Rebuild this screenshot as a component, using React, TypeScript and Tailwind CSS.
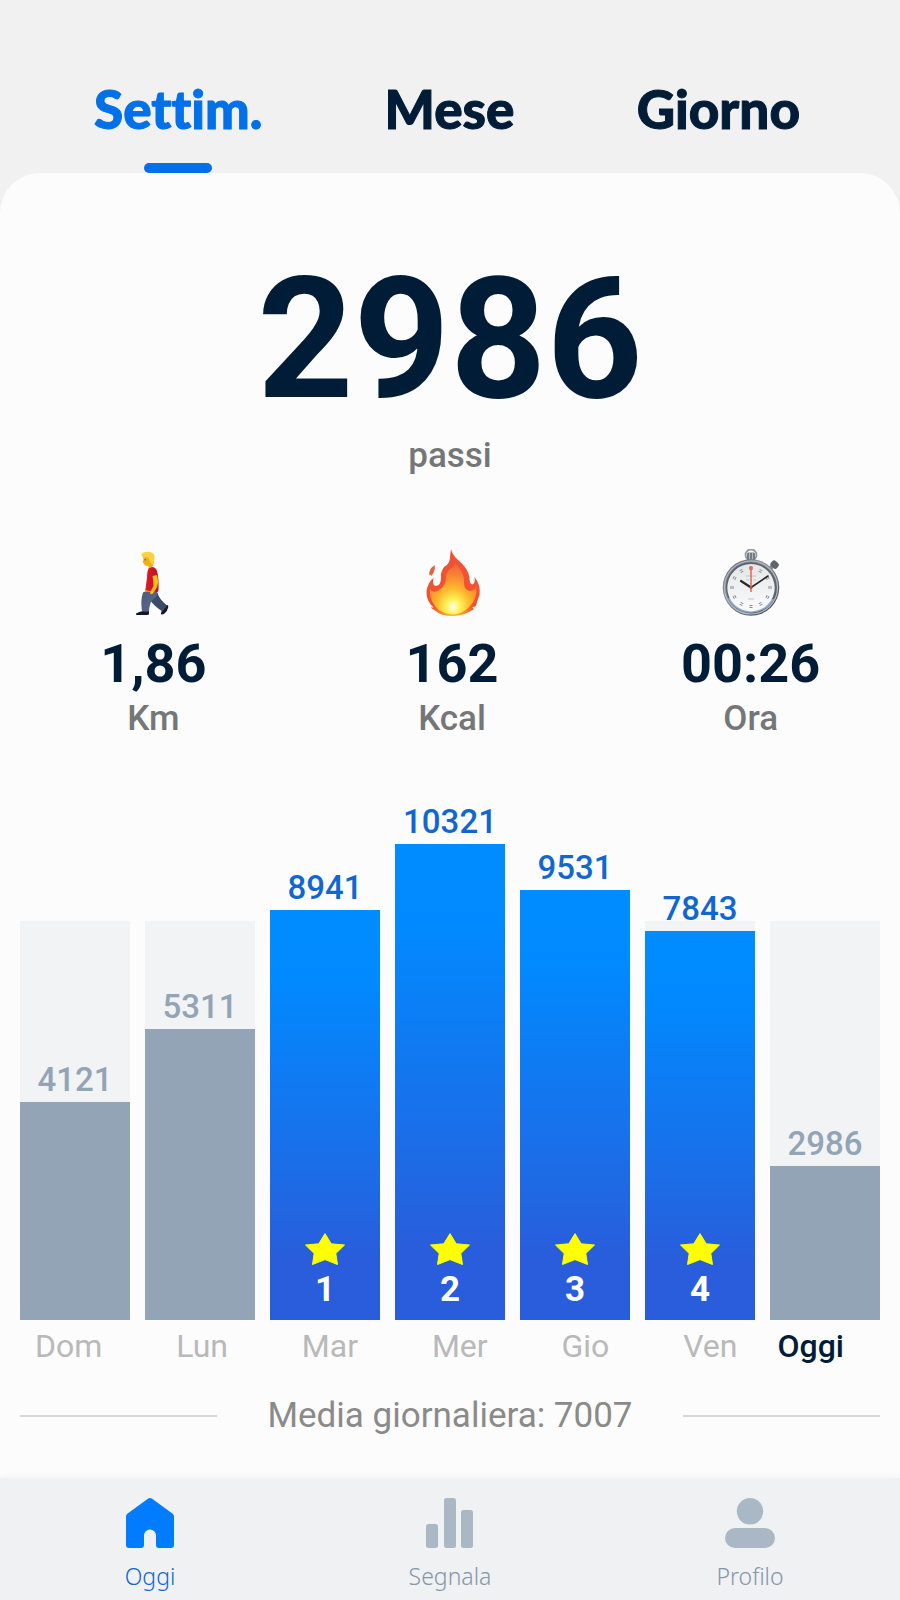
import { useState } from 'react'
import type { ReactNode } from 'react'
import { clsx } from 'clsx'

type NavKey = 'oggi' | 'segnala' | 'profilo'

interface Day {
  name: string
  steps: number
  height: number // bar height in px
  streak?: number
}

const GOAL_HEIGHT = 399

const DAYS: Day[] = [
  { name: 'Dom', steps: 4121, height: 218 },
  { name: 'Lun', steps: 5311, height: 291 },
  { name: 'Mar', steps: 8941, height: 410, streak: 1 },
  { name: 'Mer', steps: 10321, height: 476, streak: 2 },
  { name: 'Gio', steps: 9531, height: 430, streak: 3 },
  { name: 'Ven', steps: 7843, height: 389, streak: 4 },
  { name: 'Oggi', steps: 2986, height: 154 },
]

const TABS = ['Settim.', 'Mese', 'Giorno']

// ── Page ─────────────────────────────────────────────────────

export default function App() {
  const [tab, setTab] = useState('Settim.')
  const [nav, setNav] = useState<NavKey>('oggi')
  const pastDays = DAYS.slice(0, -1)
  const today = DAYS[DAYS.length - 1]

  return (
    <div className="min-h-screen flex flex-col bg-[#f1f1f1] font-['Roboto',sans-serif]">
      <header className="flex justify-between pl-[94px] pr-[100px] pt-[77px]">
        {TABS.map((t) => (
          <button
            key={t}
            type="button"
            onClick={() => setTab(t)}
            className={clsx(
              "flex flex-col items-center gap-[22px] font-['Lato',sans-serif] font-black text-[53px] leading-[64px] [font-variant-ligatures:none] [-webkit-text-stroke:1px]",
              t === tab ? 'text-[#0270e8]' : 'text-[#011c37]'
            )}
          >
            {t}
            <span className={clsx('h-[10px] w-[68px] rounded-full', t === tab && 'bg-[#0270e8]')} />
          </button>
        ))}
      </header>

      <main className="flex-1 bg-[#fcfcfc] rounded-t-[40px] pt-[84px] pb-10">
        {/* Total */}
        <section className="text-center">
          <h1 className="text-[168px] leading-[166px] font-bold text-[#011c37]">2986</h1>
          <p className="mt-[13px] text-[35px] leading-10 font-medium text-[#757678]">passi</p>
        </section>

        {/* Stats */}
        <section className="mt-[73px] grid grid-cols-3 pl-1">
          <Stat icon={<Walker />} value="1,86" unit="Km" />
          <Stat icon={<Flame />} value="162" unit="Kcal" />
          <Stat icon={<Stopwatch />} value="00:26" unit="Ora" />
        </section>

        {/* Chart */}
        <section className="mt-[62px] px-5">
          <div className="grid grid-cols-7 gap-[15px] h-[519px]">
            {DAYS.map((d) => (
              <Bar key={d.name} day={d} />
            ))}
          </div>
        </section>

        <div className="mt-[6px] flex gap-10 pl-[35px] pr-[56px] text-[32px] leading-10">
          <div className="flex flex-1 justify-between text-[#b9b9b9]">
            {pastDays.map((d) => (
              <span key={d.name}>{d.name}</span>
            ))}
          </div>
          <span className="font-medium text-[#011c37]">{today.name}</span>
        </div>

        <div className="mt-[30px] flex items-center gap-[50px] px-5">
          <div className="h-[2px] flex-1 bg-[#d8d8d8]" />
          <p className="text-[35px] leading-10 text-[#8a8a8a]">Media giornaliera: 7007</p>
          <div className="h-[2px] flex-1 bg-[#d8d8d8]" />
        </div>
      </main>

      <nav className="grid grid-cols-3 bg-[#eff1f3] pt-5 pb-[9px] shadow-[0_0_8px_#eeeeee]">
        <NavItem label="Oggi" active={nav === 'oggi'} onClick={() => setNav('oggi')}>
          <path d="M23.2 .6 Q25 -.6 26.8 .6 L48 16 Q49 17 49 18.500 V47 Q49 50 46 50 H34 Q31 50 31 47 V37.500 A6 6 0 0 0 19 37.500 V47 Q19 50 16 50 H4 Q1 50 1 47 V18.500 Q1 17 2 16 Z" />
        </NavItem>
        <NavItem label="Segnala" active={nav === 'segnala'} onClick={() => setNav('segnala')}>
          <rect x="1" y="26" width="12" height="24" rx="2.500" />
          <rect x="19" y="0" width="12" height="50" rx="2.500" />
          <rect x="36" y="12" width="12" height="38" rx="2.500" />
        </NavItem>
        <NavItem label="Profilo" active={nav === 'profilo'} onClick={() => setNav('profilo')}>
          <circle cx="25" cy="13.300" r="13.200" />
          <rect x="0" y="30" width="50" height="20" rx="10" />
        </NavItem>
      </nav>
    </div>
  )
}

// ── Parts ────────────────────────────────────────────────────

function Stat({ icon, value, unit }: { icon: ReactNode; value: string; unit: string }) {
  return (
    <div className="flex flex-col items-center">
      {icon}
      <p className="mt-[18px] text-[54px] leading-[60px] font-bold text-[#011c37]">{value}</p>
      <p className="mt-[5px] text-[35px] leading-10 font-medium text-[#757678]">{unit}</p>
    </div>
  )
}

function Bar({ day }: { day: Day }) {
  return (
    <div className="relative flex flex-col justify-end">
      {/* goal track */}
      <div className="absolute inset-x-0 bottom-0 bg-[#f1f3f5]" style={{ height: GOAL_HEIGHT }} />
      <p
        className={clsx(
          'relative mb-[2px] text-center text-[33px] leading-10 font-medium',
          day.streak ? 'text-[#1167d2]' : 'text-[#93a4b6]'
        )}
      >
        {day.steps}
      </p>
      <div
        className={clsx(
          'relative flex flex-col items-center justify-end pb-[10px]',
          day.streak
            ? 'bg-[linear-gradient(#008cff_0%,#018aff_16%,#1a6fe9_60%,#295ddb_85%,#295ddb_100%)]'
            : 'bg-[#93a4b6]'
        )}
        style={{ height: day.height }}
      >
        {day.streak && (
          <>
            <svg viewBox="0 0 40 32" className="w-10 h-8" fill="#ffff00" stroke="#ffff00" strokeLinejoin="round">
              <path d="M20 .6 L26.200 10.800 L39.500 12 L30.800 20.500 L32.500 31.500 L20 26.600 L7.500 31.500 L9.200 20.500 L.5 12 L13.800 10.800 Z" />
            </svg>
            <span className="mt-[5px] text-[35px] leading-10 font-bold text-white">{day.streak}</span>
          </>
        )}
      </div>
    </div>
  )
}

interface NavItemProps {
  label: string
  active: boolean
  onClick: () => void
  children: ReactNode
}

function NavItem({ label, active, onClick, children }: NavItemProps) {
  return (
    <button
      type="button"
      onClick={onClick}
      className={clsx('flex flex-col items-center gap-[13px]', active ? 'text-[#027cff]' : 'text-[#aab8c6]')}
    >
      <svg viewBox="0 0 50 50" className="w-[50px] h-[50px]" fill="currentColor">
        {children}
      </svg>
      <span
        className={clsx(
          "font-['Noto_Sans',sans-serif] font-light text-[23px] leading-[30px]",
          active ? 'text-[#1467cc]' : 'text-[#8496a9]'
        )}
      >
        {label}
      </span>
    </button>
  )
}

// ── Drawings ─────────────────────────────────────────────────

function Walker() {
  return (
    <svg viewBox="0 0 58 67" className="w-[58px] h-[67px]" aria-hidden="true">
      <defs>
        <linearGradient id="jeans" x1="0" y1="0" x2="1" y2="1">
          <stop offset="0" stopColor="#4c5b7c" />
          <stop offset="1" stopColor="#5c6a8b" />
        </linearGradient>
        <linearGradient id="shirt" x1="0" y1="0" x2="1" y2="0">
          <stop offset="0" stopColor="#e01a2c" />
          <stop offset="1" stopColor="#b8121f" />
        </linearGradient>
      </defs>
      {/* shoes */}
      <path d="M12 64.500 Q15 62.500 19 62 L25 61 V65 Q25 66 23 66 H13 Q11.600 66 12 64.500 Z" fill="#14172c" />
      <path d="M37.500 62.500 L42 56.500 Q44.500 55 44.300 58 Q43.500 62 40.500 64.500 Q38 66 36.800 65 Z" fill="#14172c" />
      {/* far arm */}
      <path d="M23 34 L21 42 L19 46 Q18 49 21 48 L26 42 Z" fill="#f0a60d" />
      {/* legs */}
      <path d="M25 44 L33.500 44 Q35 50 43 56.500 L38.500 62.500 Q30 57 26 51 Z" fill="#3d4a69" />
      <path d="M19.500 43 L33.500 42 Q34 48 28.500 51 Q25.500 54 25 62.500 L18 62.500 Q16.500 52 18.500 45 Z" fill="url(#jeans)" />
      {/* shirt */}
      <path d="M25 18.500 Q31 16.500 33 22 Q35 29 34.500 41 L33.500 43 Q27 43 21.500 41 Q22 35 23 29 Q23 22 25 18.500 Z" fill="url(#shirt)" />
      {/* near arm */}
      <path d="M28.500 27 L33 26 Q35 33 33 38 L29 44.500 Q26.500 46.500 26 43.500 L29.500 37 Q29.500 32 28.500 27 Z" fill="#fbbd17" />
      {/* head */}
      <path d="M19.500 11 Q18.500 8 20 5 H29 Q31 11 29 17 Q27 19.500 24.500 18.500 V17 Q20.500 17.500 20.200 15 L18.500 13 Z" fill="#f3ae1a" />
      <path d="M18 7.500 Q16.500 4.500 19 4 Q22 2 26 3 Q31 4 30.500 9 Q30.500 12.500 28.500 16 L26 12.500 Q25 8 22 8 Q19.500 8.500 18 7.500 Z" fill="#fad13e" />
      <path d="M20.500 10.800 h1.500" stroke="#7a4a0b" strokeWidth="1" />
    </svg>
  )
}

function Flame() {
  return (
    <svg viewBox="0 0 58 67" className="w-[58px] h-[67px]" aria-hidden="true">
      <defs>
        <radialGradient id="flameOuter" cx="0.5" cy="0.9" r="0.85">
          <stop offset="0" stopColor="#ffd92e" />
          <stop offset="0.250" stopColor="#fb8a24" />
          <stop offset="0.450" stopColor="#f4512c" />
          <stop offset="1" stopColor="#ee5436" />
        </radialGradient>
        <radialGradient id="flameInner" cx="0.5" cy="0.85" r="0.8">
          <stop offset="0" stopColor="#fffef0" />
          <stop offset="0.180" stopColor="#fff35a" />
          <stop offset="0.450" stopColor="#ffb92b" />
          <stop offset="1" stopColor="#f4713f" stopOpacity="0.700" />
        </radialGradient>
      </defs>
      <path
        d="M28 0 Q29 5 34 10 Q46 20 46.500 29 Q46.500 35 49.500 35.500 Q52.500 34 51.500 28 Q58 36 56.500 46 Q54 52 53 57 L49 58.500 L51 60 Q41 67 30 67 Q18 67 12 61.500 L7.500 58.500 L10.500 58.500 Q3 52 3.500 42 Q5 33 10.500 29 Q9 37 13 37 Q18 36 18 29 Q17 24 21 18 Q27 15 27 8 Q27.500 3 28 0 Z"
        fill="url(#flameOuter)"
      />
      <path
        d="M32 14 Q41 23 41 31 Q40 41 47 42 Q52 41 53 38 Q55 49 47 57 Q40 65 30 65.500 Q18 65 12 57 Q6 49 7 40 Q10 45 16 41 Q23 37 23 28 Q24 21 29 19 Q32 17 32 14 Z"
        fill="url(#flameInner)"
      />
      <path d="M11.500 16 Q13 21 8.500 27 Q7.500 25 6.500 26.500 Q5 21 11.500 16 Z" fill="#e8603f" />
    </svg>
  )
}

function Stopwatch() {
  // minute marks every 30 degrees
  const marks = Array.from({ length: 12 }, (_, i) => i * 30)
  return (
    <svg viewBox="0 0 58 67" className="w-[58px] h-[67px]" aria-hidden="true">
      <defs>
        <linearGradient id="steel" x1="0" y1="0" x2="1" y2="1">
          <stop offset="0" stopColor="#5a5f67" />
          <stop offset="0.350" stopColor="#8f959d" />
          <stop offset="0.600" stopColor="#6f757e" />
          <stop offset="1" stopColor="#3b3f47" />
        </linearGradient>
        <linearGradient id="dial" x1="0" y1="0" x2="0" y2="1">
          <stop offset="0" stopColor="#e4e6e8" />
          <stop offset="1" stopColor="#fbfbfc" />
        </linearGradient>
      </defs>
      <circle cx="29" cy="6" r="5.500" fill="none" stroke="#9299a1" strokeWidth="1.800" />
      <rect x="25" y="3.500" width="8" height="8" rx="1.500" fill="#747a83" />
      <path d="M27.500 4 V10 M30.500 4 V10" stroke="#c7cbd0" strokeWidth="0.800" />
      <path d="M48 20 L52 15" stroke="#8b9199" strokeWidth="4" />
      <rect x="48.500" y="12.500" width="8" height="7" rx="2.500" transform="rotate(40 53 16)" fill="#5f656d" />
      <circle cx="29" cy="38.500" r="28.300" fill="url(#steel)" />
      <circle cx="29" cy="38.500" r="26.500" fill="none" stroke="#b4bac2" strokeWidth="1.200" />
      <circle cx="29" cy="38.500" r="25.200" fill="#5d646f" />
      <path d="M7 49 A25 25 0 0 0 51 50" fill="none" stroke="#91a8d2" strokeWidth="2" />
      <circle cx="29" cy="38.700" r="23.700" fill="url(#dial)" />
      {marks.map((a) => (
        <path key={a} d="M27.500 18.500 h3 M27.500 20.500 h3" stroke="#85888d" strokeWidth="1" transform={`rotate(${a} 29 38.500)`} />
      ))}
      <path d="M24 27 h10 M24 31 h3 M31 31 h3 M26 50 h6" stroke="#c3c5c8" strokeWidth="1" />
      <path d="M29 38.500 L19 32" stroke="#25282e" strokeWidth="2.200" strokeLinecap="round" />
      <path d="M29 38.500 L46 27" stroke="#25282e" strokeWidth="1.600" strokeLinecap="round" />
      <path d="M29 17 V43" stroke="#e4664f" strokeWidth="1.500" />
      <circle cx="29" cy="19" r="2" fill="#e46e5a" />
      <circle cx="29" cy="38.500" r="1.600" fill="#c9523f" />
    </svg>
  )
}
